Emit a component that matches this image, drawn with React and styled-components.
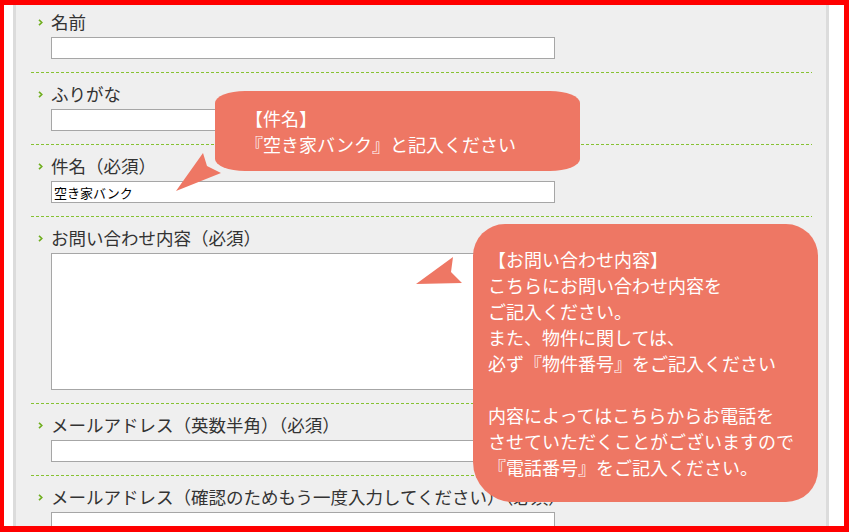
import React from "react";
import styled, { createGlobalStyle } from "styled-components";

const GlobalStyle = createGlobalStyle`
  body {
    margin: 0;
    font-family: "Noto Sans CJK JP", "Noto Sans", sans-serif;
  }
`;

const Frame = styled.div`
  position: relative;
  width: 849px;
  height: 532px;
  box-sizing: border-box;
  border: 5px solid #ff0000;
  border-left-width: 4px;
  border-bottom-width: 6px;
  padding: 0 15px 0 9px;
  background: #ffffff;
  overflow: hidden;
`;

const Panel = styled.div`
  height: 100%;
  background: #efefef;
  border-left: 3px solid #dcdcdc;
  border-right: 3px solid #dcdcdc;
  padding: 0 14px 0 15px;
  overflow: hidden;
`;

const Form = styled.div`
  margin-top: -4px;
`;

const Field = styled.div`
  display: grid;
  grid-template-columns: 20px 1fr;
  padding: 9px 0 14px;
  background: linear-gradient(to right, #86c232 3px, transparent 3px) left
    bottom / 5px 1px repeat-x;
`;

const Chevron = styled.svg`
  grid-column: 1;
  grid-row: 1;
  justify-self: end;
  align-self: center;
  margin: 1px 8px 0 0;
`;

const Label = styled.div`
  grid-column: 2;
  font-size: 17.5px;
  line-height: 24px;
  color: #333333;
  white-space: nowrap;
`;

const TextInput = styled.input`
  grid-column: 2;
  width: 504px;
  height: 22px;
  box-sizing: border-box;
  margin: 3px 0 0;
  padding: 0 2px;
  border: 1px solid #a6a6a6;
  background: #ffffff;
  font-family: "Noto Sans CJK JP", sans-serif;
  font-size: 13px;
  color: #000000;
  outline: none;
`;

const TextArea = styled.textarea`
  grid-column: 2;
  width: 504px;
  height: 137px;
  box-sizing: border-box;
  margin: 3px 0 0;
  border: 1px solid #a6a6a6;
  background: #ffffff;
  resize: none;
  outline: none;
`;

// callouts lie over the form, so they are placed on the frame
const Bubble = styled.div`
  position: absolute;
  left: ${(p) => p.$left}px;
  top: ${(p) => p.$top}px;
  width: ${(p) => p.$width}px;
  height: ${(p) => p.$height}px;
  box-sizing: border-box;
  padding: ${(p) => p.$pad};
  border-radius: ${(p) => p.$radius};
  background: #ee7764;
  color: #ffffff;
  font-size: 18px;
  line-height: 26px;
  white-space: pre;
`;

const Tail = styled.svg`
  position: absolute;
  left: ${(p) => p.$left}px;
  top: ${(p) => p.$top}px;
`;

const fields = [
  { label: "名前" },
  { label: "ふりがな" },
  { label: "件名（必須）", value: "空き家バンク" },
  { label: "お問い合わせ内容（必須）", area: true },
  { label: "メールアドレス（英数半角）（必須）" },
  { label: "メールアドレス（確認のためもう一度入力してください）（必須）" },
];

const Arrow = () => (
  <Chevron width="5" height="7" viewBox="0 0 5 7">
    <polyline points="1,0.8 3.8,3.5 1,6.2" fill="none" stroke="#6fae1e" strokeWidth="1.6" />
  </Chevron>
);

export default function App() {
  return (
    <>
      <GlobalStyle />
      <Frame>
        <Panel>
          <Form>
            {fields.map((f) => (
              <Field key={f.label}>
                <Arrow />
                <Label>{f.label}</Label>
                {f.area ? (
                  <TextArea />
                ) : (
                  <TextInput defaultValue={f.value || ""} />
                )}
              </Field>
            ))}
          </Form>
        </Panel>

        <Tail $left={166} $top={145} width="55" height="45" viewBox="0 0 55 45">
          <polygon points="33,3 37,16 51,23 6,41" fill="#ee7764" />
        </Tail>
        <Bubble
          $left={211}
          $top={86}
          $width={365}
          $height={80}
          $pad="14px 0 0 30px"
          $radius="30px / 12px"
        >
          {"【件名】\n『空き家バンク』と記入ください"}
        </Bubble>

        <Tail $left={406} $top={245} width="60" height="40" viewBox="0 0 60 40">
          <polygon points="43,7 41,22 52,33 6,34" fill="#ee7764" />
        </Tail>
        <Bubble
          $left={469}
          $top={219}
          $width={345}
          $height={278}
          $pad="22px 0 0 15px"
          $radius="32px 32px 32px 40px"
        >
          {"【お問い合わせ内容】\nこちらにお問い合わせ内容を\nご記入ください。\nまた、物件に関しては、\n必ず『物件番号』をご記入ください\n\n内容によってはこちらからお電話を\nさせていただくことがございますので\n『電話番号』をご記入ください。"}
        </Bubble>
      </Frame>
    </>
  );
}
